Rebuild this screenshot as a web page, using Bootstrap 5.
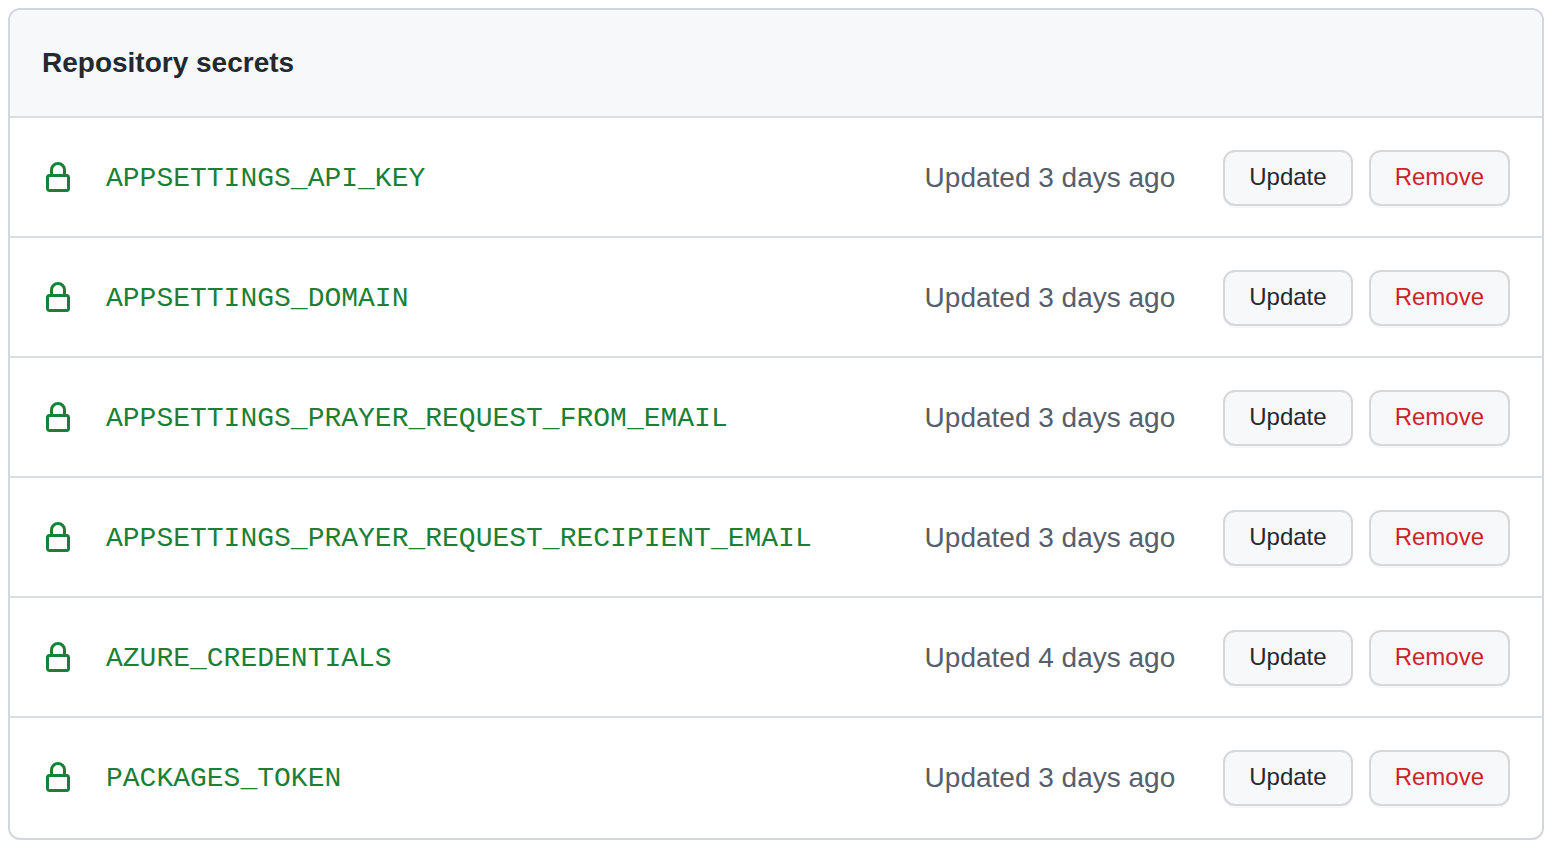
<!DOCTYPE html>
<html lang="en">
<head>
<meta charset="utf-8">
<meta name="viewport" content="width=device-width, initial-scale=1">
<title>Repository secrets</title>
<link href="https://cdn.jsdelivr.net/npm/bootstrap@5.3.0/dist/css/bootstrap.min.css" rel="stylesheet">
<style>
body{font-family:"Liberation Sans",Arial,sans-serif;font-size:28px;line-height:42px;color:#24292f;background:#fff;padding:8px 9px 0 8px}
.secrets{border:2px solid #d0d7de;border-radius:12px}
.secrets-head{background:#f6f8fa;padding:32px;height:106px;border-radius:10px 10px 0 0}
.secrets-head h1{font-size:28px;line-height:42px;font-weight:700}
.secret{border-top:2px solid #d8dee4;height:120px;padding:2px 32px 0}
.secret:last-child{height:122px;padding-top:0}
.secret svg{width:32px;height:32px;fill:#1a7f37;margin-right:32px}
.secret code{font-family:"Liberation Mono",monospace;font-size:28px;color:#1a7f37;padding-top:2px}
.updated{color:#57606a;margin-right:48px}
.btn-act{--bs-btn-font-size:24px;--bs-btn-line-height:40px;--bs-btn-border-width:2px;--bs-btn-border-radius:12px;--bs-btn-bg:#f6f8fa;--bs-btn-border-color:#d5d8da;--bs-btn-color:#24292f;padding:5px 24px 7px;box-shadow:0 2px 0 rgba(27,31,36,.04);height:56px}
.btn-act.remove{--bs-btn-color:#cf222e}
</style>
</head>
<body>
<svg class="d-none"><symbol id="lock" viewBox="0 0 16 16"><path fill-rule="evenodd" d="M4 4v2h-.25A1.75 1.75 0 002 7.75v5.5c0 .966.784 1.75 1.75 1.75h8.5A1.75 1.75 0 0014 13.25v-5.5A1.75 1.75 0 0012.25 6H12V4a4 4 0 10-8 0zm6.5 2V4a2.5 2.5 0 10-5 0v2h5zM12 7.5h.25a.25.25 0 01.25.25v5.5a.25.25 0 01-.25.25h-8.5a.25.25 0 01-.25-.25v-5.5a.25.25 0 01.25-.25H12z"/></symbol></svg>
<main class="secrets">
<header class="secrets-head"><h1 class="m-0">Repository secrets</h1></header>
<ul class="list-unstyled m-0">
<li class="secret d-flex align-items-center"><svg aria-hidden="true"><use href="#lock"/></svg><code>APPSETTINGS_API_KEY</code><span class="updated ms-auto">Updated 3 days ago</span><div class="d-flex gap-3"><button type="button" class="btn btn-act">Update</button><button type="button" class="btn btn-act remove">Remove</button></div></li>
<li class="secret d-flex align-items-center"><svg aria-hidden="true"><use href="#lock"/></svg><code>APPSETTINGS_DOMAIN</code><span class="updated ms-auto">Updated 3 days ago</span><div class="d-flex gap-3"><button type="button" class="btn btn-act">Update</button><button type="button" class="btn btn-act remove">Remove</button></div></li>
<li class="secret d-flex align-items-center"><svg aria-hidden="true"><use href="#lock"/></svg><code>APPSETTINGS_PRAYER_REQUEST_FROM_EMAIL</code><span class="updated ms-auto">Updated 3 days ago</span><div class="d-flex gap-3"><button type="button" class="btn btn-act">Update</button><button type="button" class="btn btn-act remove">Remove</button></div></li>
<li class="secret d-flex align-items-center"><svg aria-hidden="true"><use href="#lock"/></svg><code>APPSETTINGS_PRAYER_REQUEST_RECIPIENT_EMAIL</code><span class="updated ms-auto">Updated 3 days ago</span><div class="d-flex gap-3"><button type="button" class="btn btn-act">Update</button><button type="button" class="btn btn-act remove">Remove</button></div></li>
<li class="secret d-flex align-items-center"><svg aria-hidden="true"><use href="#lock"/></svg><code>AZURE_CREDENTIALS</code><span class="updated ms-auto">Updated 4 days ago</span><div class="d-flex gap-3"><button type="button" class="btn btn-act">Update</button><button type="button" class="btn btn-act remove">Remove</button></div></li>
<li class="secret d-flex align-items-center"><svg aria-hidden="true"><use href="#lock"/></svg><code>PACKAGES_TOKEN</code><span class="updated ms-auto">Updated 3 days ago</span><div class="d-flex gap-3"><button type="button" class="btn btn-act">Update</button><button type="button" class="btn btn-act remove">Remove</button></div></li>
</ul>
</main>
<script src="https://cdn.jsdelivr.net/npm/bootstrap@5.3.0/dist/js/bootstrap.bundle.min.js"></script>
</body>
</html>
